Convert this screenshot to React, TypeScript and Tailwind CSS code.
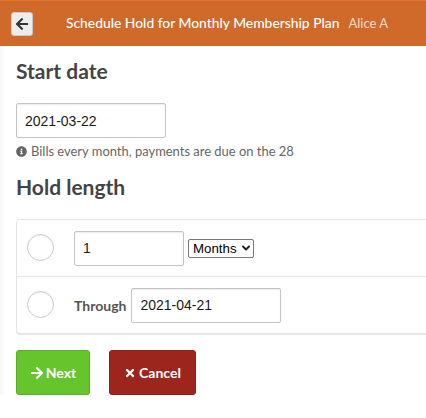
import { ChevronDown } from 'lucide-react'
import { FaArrowLeft, FaArrowRight, FaInfoCircle, FaTimes } from 'react-icons/fa'

const font = "font-['Lato','Open_Sans',sans-serif]"

function TextBox({ value, width }: { value: string; width: string }) {
  return (
    <input
      readOnly
      value={value}
      className={`${width} h-[35px] rounded-[2px] border border-[#c4c4c4] bg-white px-2 font-['Liberation_Sans',sans-serif] text-[14px] text-[#1a1a1a] shadow-[inset_0_1px_1px_rgba(0,0,0,0.08)] outline-none`}
    />
  )
}

function Radio() {
  return <div className="mb-[2px] h-[27px] w-[27px] shrink-0 rounded-full border border-[#c9c9c9] bg-white shadow-[inset_0_1px_1px_rgba(0,0,0,0.06)]" />
}

export default function App() {
  return (
    <div className={`${font} h-[418px] w-[426px] overflow-hidden bg-white text-[#444]`}>
      <header className="flex h-[46px] items-center border-t border-[#e6762f] bg-[#cf6a2b] pl-[11px]">
        <button className="flex h-[24px] w-[22px] items-center justify-center rounded-[3px] border border-[#c9c9c9] bg-[#ececec] text-[#333]">
          <FaArrowLeft size={14} />
        </button>
        <h1 className="ml-[33px] whitespace-nowrap text-[13.85px] font-medium text-white">Schedule Hold for Monthly Membership Plan</h1>
        <span className="ml-[9px] whitespace-nowrap text-[13px] text-[#f6dcc9]">Alice A</span>
      </header>

      <main className="bg-gradient-to-r from-[#f7f7f7] to-white to-[6px] pl-4">
        <h2 className="pt-[11px] text-[21px] font-bold leading-[27px] text-[#444]">Start date</h2>
        <div className="mt-[19px]">
          <TextBox value="2021-03-22" width="w-[150px]" />
        </div>
        <p className="mt-[5px] flex items-center gap-[4px] text-[12.95px] leading-[16px] text-[#666]">
          <FaInfoCircle size={11} />
          Bills every month, payments are due on the 28
        </p>

        <h2 className="mt-[14px] text-[21px] font-bold leading-[27px] text-[#444]">Hold length</h2>

        <div className="mt-[19px] w-[430px] rounded-[4px] border border-[#e5e5e5] border-b-2 bg-white">
          <div className="flex h-[57px] items-center gap-[20px] border-b border-[#e5e5e5] pl-[10px]">
            <Radio />
            <div className="flex items-center gap-1">
              <TextBox value="1" width="w-[110px]" />
              <div className="relative">
                <select className="block h-[19px] w-[66px] appearance-none rounded-[2px] border border-[#767676] bg-white pl-[4px] font-['Liberation_Sans',sans-serif] text-[13.3px] leading-[17px] text-black">
                  <option>Months</option>
                </select>
                <ChevronDown size={12} strokeWidth={4} className="pointer-events-none absolute right-[2px] top-[3px] text-[#222]" />
              </div>
            </div>
          </div>
          <div className="flex h-[56px] items-center gap-[20px] pl-[10px]">
            <Radio />
            <div className="flex items-center gap-[5px]">
              <span className="text-[14px] font-bold text-[#555]">Through</span>
              <TextBox value="2021-04-21" width="w-[150px]" />
            </div>
          </div>
        </div>

        <div className="mt-[15px] flex gap-[19px]">
          <button className="flex h-[45px] w-[74px] items-center justify-center gap-[2px] rounded-[3px] border border-[#5aae26] bg-[#66c52d] text-[14px] font-bold text-white">
            <FaArrowRight size={14} />
            Next
          </button>
          <button className="flex h-[45px] w-[87px] items-center justify-center gap-[3px] rounded-[3px] border border-[#8f211a] bg-[#9c251d] text-[14px] font-bold text-white">
            <FaTimes size={12} />
            Cancel
          </button>
        </div>
      </main>
    </div>
  )
}
